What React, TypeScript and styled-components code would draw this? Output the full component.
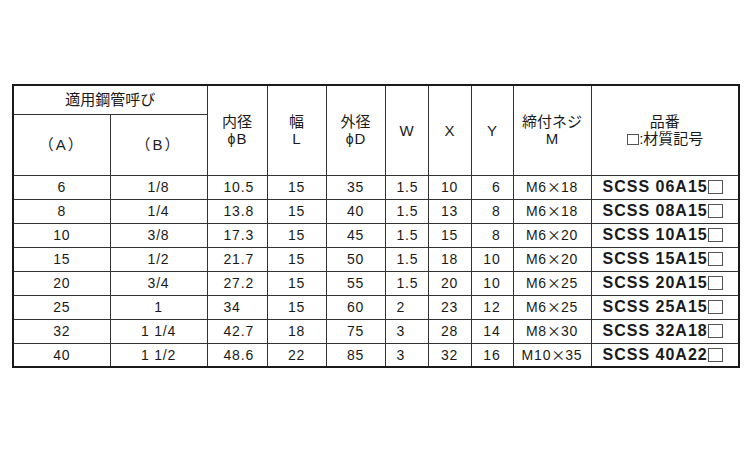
import React from 'react'
import styled, { createGlobalStyle } from 'styled-components'

const GlobalStyle = createGlobalStyle`
  body {
    margin: 0;
    background: #ffffff;
  }
`

const Page = styled.div`
  padding: 84px 0 0 12px;
  font-family: "Liberation Sans", "Noto Sans CJK JP", sans-serif;
  color: #1a1a1a;
`

const Table = styled.table`
  border-collapse: collapse;
  table-layout: fixed;
  width: 726px;
  border: 2px solid #1a1a1a;
`

const Col = styled.col<{ $w: number }>`
  width: ${p => p.$w}px;
`

const HeadRow = styled.tr<{ $h: number }>`
  height: ${p => p.$h}px;
`

const HeadCell = styled.th`
  font-weight: normal;
  font-size: 15px;
  line-height: 17px;
  text-align: center;
  vertical-align: middle;
  border: 1px solid #333;
  padding: 0;
`

const Paren = styled.span`
  letter-spacing: 2px;
  color: #222;
`

const Phi = styled.span`
  font-size: 14px;
  margin-right: 1px;
`

const Row = styled.tr`
  height: 24px;
`

const Cell = styled.td<{ $align?: 'left' | 'center' | 'right'; $pad?: number }>`
  font-size: 14px;
  letter-spacing: 0.8px;
  line-height: 16px;
  text-align: ${p => p.$align || 'center'};
  padding: 0 ${p => (p.$align === 'right' ? p.$pad || 0 : 0)}px 0
    ${p => (p.$align === 'left' ? p.$pad || 0 : 0)}px;
  border: 1px solid #333;
  white-space: nowrap;
  vertical-align: middle;
`

const CodeCell = styled(Cell)`
  font-size: 16px;
  font-weight: bold;
  letter-spacing: 1px;
  padding-left: 11px;
  text-align: left;
`

const Times = styled.span`
  font-family: "Noto Sans CJK JP", sans-serif;
  font-size: 14px;
  letter-spacing: 0;
  line-height: 14px;
`

const Box = styled.span<{ $size: number }>`
  display: inline-block;
  width: ${p => p.$size}px;
  height: ${p => p.$size - 1}px;
  border: 1px solid #555;
  box-sizing: border-box;
  vertical-align: ${p => (p.$size > 12 ? '-2px' : '-1px')};
  margin-left: ${p => (p.$size > 12 ? 0 : 1)}px;
`

const rows = [
  ['6', '1/8', '10.5', '15', '35', '1.5', '10', '6', 'M6×18', 'SCSS 06A15'],
  ['8', '1/4', '13.8', '15', '40', '1.5', '13', '8', 'M6×18', 'SCSS 08A15'],
  ['10', '3/8', '17.3', '15', '45', '1.5', '15', '8', 'M6×20', 'SCSS 10A15'],
  ['15', '1/2', '21.7', '15', '50', '1.5', '18', '10', 'M6×20', 'SCSS 15A15'],
  ['20', '3/4', '27.2', '15', '55', '1.5', '20', '10', 'M6×25', 'SCSS 20A15'],
  ['25', '1', '34', '15', '60', '2', '23', '12', 'M6×25', 'SCSS 25A15'],
  ['32', '1 1/4', '42.7', '18', '75', '3', '28', '14', 'M8×30', 'SCSS 32A18'],
  ['40', '1 1/2', '48.6', '22', '85', '3', '32', '16', 'M10×35', 'SCSS 40A22'],
]

const widths = [97, 97, 60, 59, 59, 43, 43, 42, 78, 148]

const Screw: React.FC<{ value: string }> = ({ value }) => {
  const [a, b] = value.split('×')
  return (
    <>
      {a}
      <Times>×</Times>
      {b}
    </>
  )
}

const App: React.FC = () => {
  return (
    <Page>
      <GlobalStyle />
      <Table>
        <colgroup>
          {widths.map((w, i) => (
            <Col key={i} $w={w} />
          ))}
        </colgroup>
        <thead>
          <HeadRow $h={29}>
            <HeadCell colSpan={2}>適用鋼管呼び</HeadCell>
            <HeadCell rowSpan={2}>
              内径
              <br />
              <Phi>ϕ</Phi>B
            </HeadCell>
            <HeadCell rowSpan={2}>
              幅
              <br />L
            </HeadCell>
            <HeadCell rowSpan={2}>
              外径
              <br />
              <Phi>ϕ</Phi>D
            </HeadCell>
            <HeadCell rowSpan={2}>W</HeadCell>
            <HeadCell rowSpan={2}>X</HeadCell>
            <HeadCell rowSpan={2}>Y</HeadCell>
            <HeadCell rowSpan={2}>
              締付ネジ
              <br />M
            </HeadCell>
            <HeadCell rowSpan={2}>
              品番
              <br />
              <Box $size={12} />:材質記号
            </HeadCell>
          </HeadRow>
          <HeadRow $h={61}>
            <HeadCell>
              <Paren>（A）</Paren>
            </HeadCell>
            <HeadCell>
              <Paren>（B）</Paren>
            </HeadCell>
          </HeadRow>
        </thead>
        <tbody>
          {rows.map(r => (
            <Row key={r[0]}>
              <Cell>{r[0]}</Cell>
              <Cell>{r[1]}</Cell>
              <Cell $align="left" $pad={16}>{r[2]}</Cell>
              <Cell>{r[3]}</Cell>
              <Cell>{r[4]}</Cell>
              <Cell $align="left" $pad={11}>{r[5]}</Cell>
              <Cell>{r[6]}</Cell>
              <Cell $align="right" $pad={12}>{r[7]}</Cell>
              <Cell>
                <Screw value={r[8]} />
              </Cell>
              <CodeCell>
                {r[9]}
                <Box $size={15} />
              </CodeCell>
            </Row>
          ))}
        </tbody>
      </Table>
    </Page>
  )
}

export default App
